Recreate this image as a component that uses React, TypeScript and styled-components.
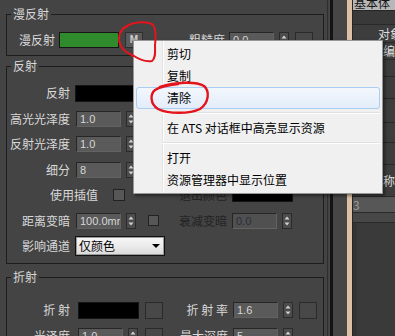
import React from "react";
import styled, { createGlobalStyle, css } from "styled-components";

const CJK = `"Noto Sans CJK SC", "Noto Sans", sans-serif`;
const LATIN = `"Liberation Sans", Arial, sans-serif`;

const GlobalStyle = createGlobalStyle`
  html, body { margin: 0; padding: 0; background: #444444; }
  #root { width: 395px; height: 336px; }
`;

const Screen = styled.div`
  position: relative;
  display: flex;
  width: 395px;
  height: 336px;
  overflow: hidden;
  background: #444444;
  font-family: ${CJK};
  font-size: 12px;
  line-height: 14px;
  color: #d9d9d9;
`;

const LeftPanel = styled.div`
  flex: 0 0 324px;
  box-sizing: border-box;
  padding: 7px 0 0 6px;
`;

const Group = styled.fieldset<{
  $mt: number;
  $pt: number;
  $pb: number;
  $cols: string;
  $rows: string;
}>`
  margin: ${(p) => p.$mt}px 0 0 0;
  padding: ${(p) => p.$pt}px 0 ${(p) => p.$pb}px 0;
  border: 1px solid #1d1d1d;
  min-width: 0;
  display: grid;
  grid-template-columns: ${(p) => p.$cols};
  grid-template-rows: ${(p) => p.$rows};
  align-items: center;
`;

const Legend = styled.legend`
  margin-left: 4px;
  padding: 0 2px;
  line-height: 14px;
  color: #d9d9d9;
`;

const Label = styled.span<{ $pr: number; $dim?: boolean }>`
  text-align: right;
  padding-right: ${(p) => p.$pr}px;
  white-space: nowrap;
  color: ${(p) => (p.$dim ? "#232323" : "#d9d9d9")};
`;

const InlineLabel = styled.span<{ $w: number }>`
  width: ${(p) => p.$w}px;
  flex: none;
  text-align: right;
  white-space: nowrap;
`;

const Cell = styled.div<{ $gap?: number; $span?: string }>`
  display: flex;
  align-items: center;
  gap: ${(p) => p.$gap ?? 0}px;
  min-width: 0;
  grid-column: ${(p) => p.$span ?? "auto"};
`;

const Swatch = styled.div<{ $color: string; $w: number; $h: number; $ml?: number }>`
  flex: none;
  width: ${(p) => p.$w}px;
  height: ${(p) => p.$h}px;
  margin-left: ${(p) => p.$ml ?? 0}px;
  box-sizing: border-box;
  background: ${(p) => p.$color};
  border: 1px solid #151515;
`;

const MapButton = styled.div<{ $ml?: number }>`
  flex: none;
  width: 18px;
  height: 17px;
  margin-left: ${(p) => p.$ml ?? 0}px;
  box-sizing: border-box;
  background: #484848;
  border: 1px solid #2a2a2a;
  display: flex;
  align-items: center;
  justify-content: center;
  font-family: ${LATIN};
  font-size: 10px;
  font-weight: bold;
  color: #cfcfcf;
`;

const MButton = styled(MapButton)`
  height: 16px;
  background: #5a5a5a;
  border-color: #2f2f2f;
`;

const Field = styled.div<{ $dim?: boolean }>`
  flex: none;
  width: 45px;
  height: 16px;
  box-sizing: border-box;
  background: ${(p) => (p.$dim ? "#505050" : "#5a5a5a")};
  border: 1px solid #262626;
  border-right-color: #626262;
  border-bottom-color: #626262;
  padding-left: 3px;
  font-family: ${LATIN};
  font-size: 11px;
  line-height: 14px;
  color: ${(p) => (p.$dim ? "#2c2c40" : "#d6d6d6")};
  overflow: hidden;
  white-space: nowrap;
`;

const ArrowBox = styled.div`
  flex: none;
  width: 10px;
  height: 16px;
  box-sizing: border-box;
  background: #4c4c4c;
  border: 1px solid #2b2b2b;
  display: flex;
  align-items: center;
  justify-content: center;
`;

const SpinWrap = styled.div`
  display: flex;
  align-items: center;
  gap: 5px;
  flex: none;
`;

const Check = styled.div<{ $ml: number; $size: number }>`
  flex: none;
  width: ${(p) => p.$size}px;
  height: ${(p) => p.$size}px;
  margin-left: ${(p) => p.$ml}px;
  box-sizing: border-box;
  background: #575757;
  border: 1px solid #222222;
`;

const Dropdown = styled.div`
  flex: none;
  width: 90px;
  height: 20px;
  margin-left: -1px;
  box-sizing: border-box;
  border: 1px solid #121212;
  box-shadow: inset 0 0 0 1px #9a9a9a;
  background: linear-gradient(#f8f8f8, #ebebeb 50%, #d9d9d9);
  display: flex;
  align-items: center;
  justify-content: space-between;
  padding: 0 4px 0 3px;
  color: #000;
  font-size: 12px;
`;

const Spinner = ({ value, dim }: { value: string; dim?: boolean }) => (
  <SpinWrap>
    <Field $dim={dim}>{value}</Field>
    <ArrowBox>
      <svg width="6" height="12" viewBox="0 0 6 12">
        <path d="M3 1.5 L5.5 4.5 L0.5 4.5 Z" fill="#d2d2d2" />
        <path d="M0.5 7.5 L5.5 7.5 L3 10.5 Z" fill="#d2d2d2" />
      </svg>
    </ArrowBox>
  </SpinWrap>
);

const Strip = styled.div<{ $w: number; $bg: string }>`
  flex: 0 0 ${(p) => p.$w}px;
  background: ${(p) => p.$bg};
`;

const RightPanel = styled.div`
  flex: 1;
  min-width: 0;
  display: flex;
  flex-direction: column;
  background: #3c3c3c;
  overflow: hidden;
`;

const RTitle = styled.div`
  flex: none;
  height: 11px;
  box-sizing: border-box;
  background: #b7b7b7;
  color: #151515;
  line-height: 6px;
  padding-left: 1px;
  white-space: nowrap;
  overflow: hidden;
  border-bottom: 1px solid #262626;
`;

const RRow = styled.div<{ $h: number; $bg?: string; $indent?: number; $color?: string }>`
  flex: none;
  height: ${(p) => p.$h}px;
  box-sizing: border-box;
  border-bottom: 1px solid #292929;
  background: ${(p) => p.$bg ?? "#3d3d3d"};
  padding-left: ${(p) => p.$indent ?? 0}px;
  color: ${(p) => p.$color ?? "#dedede"};
  white-space: nowrap;
  overflow: hidden;
  display: flex;
  align-items: center;
`;

const RFill = styled.div`
  flex: 1;
  background: #3a3a3a;
  border-left: 4px solid #343434;
`;

const Menu = styled.div`
  position: absolute;
  left: 133px;
  top: 40px;
  width: 250px;
  box-sizing: border-box;
  padding: 2px;
  border: 1px solid #979797;
  background:
    linear-gradient(
      to right,
      transparent 28px,
      #e2e3e3 28px,
      #e2e3e3 29px,
      #ffffff 29px,
      #ffffff 30px,
      transparent 30px
    ),
    #f0f0f0;
  box-shadow: 2px 2px 3px rgba(0, 0, 0, 0.45);
  color: #000;
  font-family: ${CJK};
  font-size: 12px;
`;

const MenuItem = styled.div<{ $active?: boolean }>`
  height: 22px;
  line-height: 22px;
  padding-left: 31px;
  box-sizing: border-box;
  white-space: nowrap;
  border-radius: 3px;
  ${(p) =>
    p.$active &&
    css`
      background: linear-gradient(#f3f7fd, #e3edf9);
      border: 1px solid #a9cdf3;
      line-height: 20px;
      padding-left: 30px;
    `}
`;

const MenuSep = styled.div`
  height: 8px;
  display: flex;
  align-items: center;
  padding-left: 26px;
  &::before {
    content: "";
    flex: 1;
    height: 1px;
    background: #e0e0e0;
    border-bottom: 1px solid #ffffff;
  }
`;

const Annotation = styled.svg`
  position: absolute;
  left: 0;
  top: 0;
  width: 395px;
  height: 336px;
  pointer-events: none;
`;

export default function App() {
  return (
    <>
      <GlobalStyle />
      <Screen>
        <LeftPanel>
          <Group $mt={0} $pt={6} $pb={2} $cols="52px 120px 50px 1fr" $rows="26px">
            <Legend>漫反射</Legend>
            <Label $pr={4}>漫反射</Label>
            <Cell $gap={6}>
              <Swatch $color="#2f8b2c" $w={60} $h={16} />
              <MButton>M</MButton>
            </Cell>
            <Label $pr={4}>粗糙度</Label>
            <Cell $gap={6}>
              <Spinner value="0.0" />
              <MapButton />
            </Cell>
          </Group>

          <Group
            $mt={3}
            $pt={7}
            $pb={4}
            $cols="69px 96px 60px 1fr"
            $rows="26px 25px 26px 25px 26px 25px 26px"
          >
            <Legend>反射</Legend>

            <Label $pr={6}>反射</Label>
            <Cell $gap={6}>
              <Swatch $color="#000000" $w={60} $h={17} $ml={-1} />
              <MapButton />
            </Cell>
            <span />
            <span />

            <Label $pr={6}>高光光泽度</Label>
            <Cell>
              <Spinner value="1.0" />
            </Cell>
            <span />
            <span />

            <Label $pr={6}>反射光泽度</Label>
            <Cell>
              <Spinner value="1.0" />
            </Cell>
            <span />
            <span />

            <Label $pr={6}>细分</Label>
            <Cell>
              <Spinner value="8" />
            </Cell>
            <span />
            <span />

            <Cell $span="1 / 3">
              <InlineLabel $w={91}>使用插值</InlineLabel>
              <Check $ml={15} $size={12} />
            </Cell>
            <Label $pr={5} $dim>
              退出颜色
            </Label>
            <Cell>
              <Swatch $color="#000000" $w={61} $h={14} />
            </Cell>

            <Label $pr={6}>距离变暗</Label>
            <Cell>
              <Spinner value="100.0mm" />
              <Check $ml={12} $size={11} />
            </Cell>
            <Label $pr={5} $dim>
              衰减变暗
            </Label>
            <Cell>
              <Spinner value="0.0" dim />
            </Cell>

            <Label $pr={6}>影响通道</Label>
            <Cell>
              <Dropdown>
                <span>仅颜色</span>
                <svg width="8" height="4" viewBox="0 0 8 4">
                  <path d="M0 0 L8 0 L4 4 Z" fill="#000" />
                </svg>
              </Dropdown>
            </Cell>
            <span />
            <span />
          </Group>

          <Group $mt={6} $pt={13} $pb={0} $cols="71px 97px 58px 1fr" $rows="26px 26px">
            <Legend>折射</Legend>

            <Label $pr={8}>折 射</Label>
            <Cell $gap={6}>
              <Swatch $color="#000000" $w={61} $h={17} />
              <MapButton />
            </Cell>
            <Label $pr={5}>折 射 率</Label>
            <Cell $gap={6}>
              <Spinner value="1.6" />
              <MapButton />
            </Cell>

            <Label $pr={8}>光泽度</Label>
            <Cell $gap={7}>
              <Spinner value="1.0" />
              <MapButton />
            </Cell>
            <Label $pr={5}>最大深度</Label>
            <Cell>
              <Spinner value="5" />
            </Cell>
          </Group>
        </LeftPanel>

        <Strip $w={3} $bg="#444444" />
        <Strip $w={1} $bg="#2e2e2e" />
        <Strip $w={2} $bg="#444444" />
        <Strip $w={3} $bg="#141414" />
        <Strip $w={14} $bg="#464646" />
        <Strip $w={5} $bg="#dcc1a6" />
        <Strip $w={1} $bg="#262626" />

        <RightPanel>
          <RTitle>基本体</RTitle>
          <RRow $h={14} $bg="#393939" />
          <RRow $h={18} $indent={25}>
            对象
          </RRow>
          <RRow $h={17} $indent={30}>
            编辑
          </RRow>
          <RRow $h={17} />
          <RRow $h={22} />
          <RRow $h={24} />
          <RRow $h={20} />
          <RRow $h={22} />
          <RRow $h={32} $indent={18}>
            名称
          </RRow>
          <RRow $h={16} $bg="#575757" $color="#9a9a9a" $indent={0}>
            3
          </RRow>
          <RRow $h={10} $bg="#474747" />
          <RFill />
        </RightPanel>

        <Menu>
          <MenuItem>剪切</MenuItem>
          <MenuItem>复制</MenuItem>
          <MenuItem $active>清除</MenuItem>
          <MenuSep />
          <MenuItem>在 ATS 对话框中高亮显示资源</MenuItem>
          <MenuSep />
          <MenuItem>打开</MenuItem>
          <MenuItem>资源管理器中显示位置</MenuItem>
        </Menu>

        <Annotation viewBox="0 0 395 336">
          <path
            d="M126 27 C131 22, 145 21, 152 24 C156 27, 156 36, 155 45 C155 52, 156 58, 152 61 C146 62, 140 60, 134 56 C127 53, 119 49, 119 38 C119 31, 123 27, 131 24"
            fill="none"
            stroke="#e3141b"
            strokeWidth="2"
            strokeLinecap="round"
          />
          <path
            d="M160 87 C175 82, 196 81, 204 86 C210 91, 209 103, 200 109 C190 114, 168 114, 158 109 C150 104, 150 94, 155 90 C160 87, 168 85, 178 84"
            fill="none"
            stroke="#e3141b"
            strokeWidth="2.4"
            strokeLinecap="round"
          />
        </Annotation>
      </Screen>
    </>
  );
}
